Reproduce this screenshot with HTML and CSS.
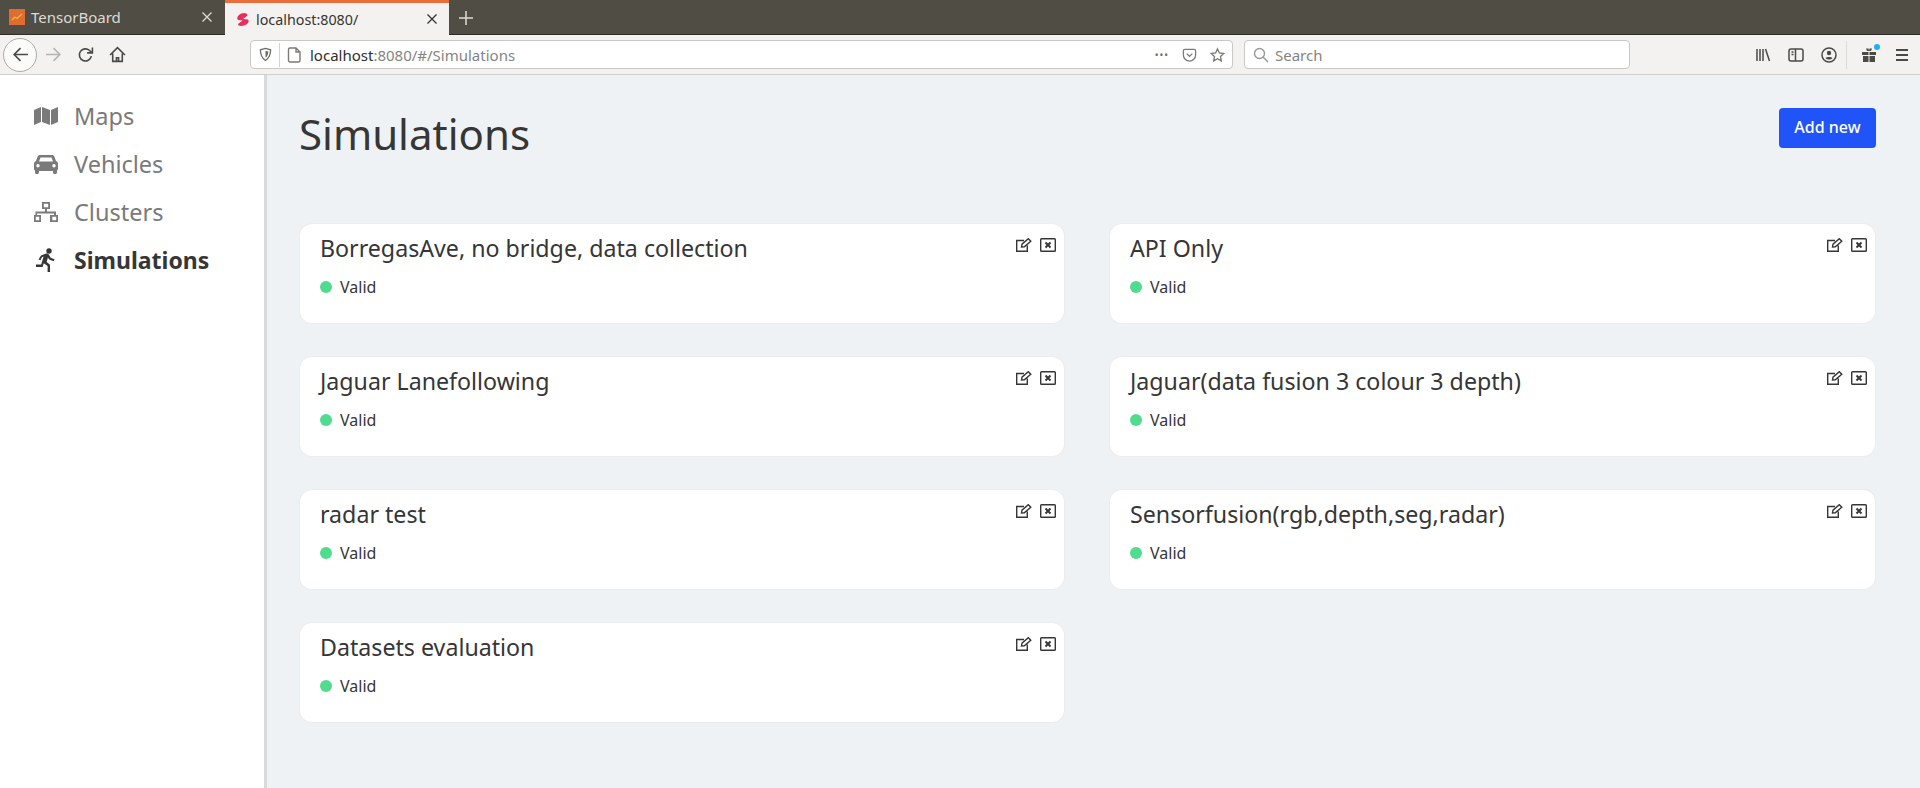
FILE: index.html
```html
<!DOCTYPE html>
<html lang="en">
<head>
    <meta charset="UTF-8">
    <title>localhost:8080/</title>
    <link rel="stylesheet" href="styles.css">
</head>
<body>
<div class="tabbar">
    <div class="tab">
        <svg class="favicon" viewBox="0 0 16 16"><rect width="16" height="16" fill="#dd6d33"/><path d="M3 11l3-3 2 1.500L13 5" fill="none" stroke="#f0b92e" stroke-width="1.300"/></svg>
        <span class="tab-title">TensorBoard</span>
        <svg class="tab-close" viewBox="0 0 10 10"><path d="M.5.5l9 9M9.500.5l-9 9"/></svg>
    </div>
    <div class="tab active">
        <svg class="favicon" viewBox="0 0 12 13"><path d="M7 0c2 0 4 1 3.500 2.500L6 6l5 .5c1 1.500.5 3-.5 4C9.500 12 6 13 4 13 2 13 1 12 1 11l4.500-3.500L1 7C0 6 0 4 1 3c1.500-2 4-3 6-3z" fill="#ea2d5e"/></svg>
        <span class="tab-title">localhost:8080/</span>
        <svg class="tab-close" viewBox="0 0 10 10"><path d="M.5.5l9 9M9.500.5l-9 9"/></svg>
    </div>
    <svg class="new-tab" viewBox="0 0 14 14"><path d="M7 0v14M0 7h14"/></svg>
</div>

<div class="toolbar">
    <div class="nav-buttons">
        <div class="back">
            <svg class="tool-icon" viewBox="0 0 16 16"><path d="M15 8H2M8 2L2 8l6 6"/></svg>
        </div>
        <svg class="tool-icon faded" viewBox="0 0 16 16"><path d="M1 8h13M8 2l6 6-6 6"/></svg>
        <svg class="tool-icon reload" viewBox="0 0 16 16"><path d="M13.500 9.500a5.700 5.700 0 1 1-1.700-5.300L14 6.500M14.500 1.500v5H9.500"/></svg>
        <svg class="tool-icon home" viewBox="0 0 16 16"><path d="M1 8.500L8 1.500l7 7M3.500 7v7.500h9V7M7 14.500v-3.500h2v3.500"/></svg>
    </div>
    <div class="urlbar">
        <svg class="shield" viewBox="0 0 14 15"><path d="M7 1l5.500 1.500c0 5.500-1.500 9-5.500 11.500C3 11.500 1.500 8 1.500 2.500z"/><path class="half" d="M7 3.500l3 .8c0 3-.8 5-3 6.700z"/></svg>
        <span class="url-sep"></span>
        <svg class="url-icon" viewBox="0 0 14 16"><path d="M2.500 1h6l4 4v8.500a1.500 1.500 0 0 1-1.500 1.500H2.500A1.500 1.500 0 0 1 1 13.500v-11A1.500 1.500 0 0 1 2.500 1zM8.500 1v4h4"/></svg>
        <span class="url-text"><span class="url-host">localhost</span>:8080/#/Simulations</span>
        <span class="url-dots">•••</span>
        <svg class="url-icon pocket" viewBox="0 0 16 16"><path d="M3 2h10a1.500 1.500 0 0 1 1.500 1.500V8a6.500 6.500 0 0 1-13 0V3.500A1.500 1.500 0 0 1 3 2zM5 6.500l3 3 3-3"/></svg>
        <svg class="url-icon" viewBox="0 0 16 16"><path d="M8 1.500l2 4.300 4.700.6-3.500 3.200.9 4.700L8 12l-4.100 2.300.9-4.700L1.300 6.400 6 5.800z"/></svg>
    </div>
    <div class="searchbar">
        <svg class="search-icon" viewBox="0 0 16 16"><circle cx="6.500" cy="6.500" r="5"/><path d="M10 10l5 5"/></svg>
        <span>Search</span>
    </div>
    <div class="tool-right">
        <svg class="tool-icon" viewBox="0 0 16 16"><path d="M2 2v12M5 2v12M8 2v12M10.500 2l4 12"/></svg>
        <svg class="tool-icon" viewBox="0 0 16 16"><rect x="1" y="2" width="14" height="12" rx="2"/><path d="M7.500 2v12M3.500 5h2M3.500 7.500h2"/></svg>
        <svg class="tool-icon" viewBox="0 0 16 16"><circle cx="8" cy="8" r="7"/><circle cx="8" cy="6" r="2.200" class="solid"/><path class="solid" d="M4.500 11c1-1.500 6-1.500 7 0-1 1.200-2 1.600-3.500 1.600S5.500 12.200 4.500 11z"/></svg>
        <span class="tool-sep"></span>
        <span class="gift">
            <svg class="tool-icon" viewBox="0 0 16 16"><path class="solid" d="M1 5h6.500v3H1zM8.500 5H15v3H8.500zM2 9h5.500v6H2zM8.500 9H14v6H8.500zM5 1.500h2.500L8 4H6zM11 1.500H8.500L8 4h2z"/></svg>
            <span class="gift-dot"></span>
        </span>
        <svg class="tool-icon menu" viewBox="0 0 16 16"><path d="M2 3h12M2 8h12M2 13h12"/></svg>
    </div>
</div>

<div class="app">
    <nav class="sidebar">
        <a class="nav-item">
            <svg class="nav-icon" viewBox="0 0 24 20"><path d="M0 4l7-3v15l-7 3zM8 1l8 3v15l-8-3zM17 4l7-3v15l-7 3z"/></svg>
            Maps
        </a>
        <a class="nav-item">
            <svg class="nav-icon" viewBox="0 0 24 20"><path fill-rule="evenodd" d="M6 1h12c1 0 2 .6 2.500 2l1.500 4c1.200.4 2 1.400 2 2.700V15c0 .8-.4 1.300-1 1.600V18.500c0 .8-.6 1.500-1.500 1.500h-1c-.9 0-1.500-.7-1.500-1.500V17H5v1.500C5 19.300 4.400 20 3.500 20h-1C1.600 20 1 19.300 1 18.500v-1.900C.4 16.300 0 15.800 0 15V9.700C0 8.400.8 7.400 2 7l1.500-4C4 1.600 5 1 6 1zM6.500 3.500L5 7.500h14l-1.500-4zM4 10a1.700 1.700 0 1 0 0 3.400A1.700 1.700 0 0 0 4 10zm16 0a1.700 1.700 0 1 0 0 3.400A1.700 1.700 0 0 0 20 10z"/></svg>
            Vehicles
        </a>
        <a class="nav-item">
            <svg class="nav-icon" viewBox="0 0 24 20"><path fill-rule="evenodd" d="M8 0h8v7h-3v2.500h9V13h2v7h-8v-7h4v-1.500H3V13h4v7H-1v0H0v-7h1.500V9.500H11V7H8zm1.800 1.800v3.400h4.400V1.800zM1.800 14.800v3.400h3.400v-3.400zm16.500 0v3.400h3.900v-3.400z"/></svg>
            Clusters
        </a>
        <a class="nav-item active">
            <svg class="nav-icon" viewBox="0 0 24 24"><circle cx="15" cy="3" r="2.700"/><path d="M7 7.500l4.500-1.800c1.300-.5 2.700-.2 3.400 1l1.800 3 3.800 1.500-.8 2-4.500-1.800-1.300-1.800-1.200 4.400 3.300 2.800V24h-2.400v-6l-3.800-2.800-1.300 3.800H2v-2.400h5.200l2.400-8-1.700.7-1.400 3-2-.9z"/></svg>
            Simulations
        </a>
    </nav>
    <main class="content">
        <div class="page-head">
            <h1>Simulations</h1>
            <button class="add-btn">Add new</button>
        </div>
        <div class="card-grid">
            <div class="card">
                <div class="card-actions">
                    <svg class="act" viewBox="0 0 16 14"><path d="M8 2.500H.7v10.800h10.600V7.500M5.500 9l.5-2.800L12.300.7l2.500 2.500L8.300 8.800z"/></svg>
                    <svg class="act" viewBox="0 0 16 14"><rect x=".7" y=".7" width="14.600" height="12.600" rx=".8"/><path class="x" d="M5.500 4.500l5 5M10.500 4.500l-5 5"/></svg>
                </div>
                <h3>BorregasAve, no bridge, data collection</h3>
                <div class="status"><span class="dot"></span>Valid</div>
            </div>
            <div class="card">
                <div class="card-actions">
                    <svg class="act" viewBox="0 0 16 14"><path d="M8 2.500H.7v10.800h10.600V7.500M5.500 9l.5-2.800L12.300.7l2.500 2.500L8.300 8.800z"/></svg>
                    <svg class="act" viewBox="0 0 16 14"><rect x=".7" y=".7" width="14.600" height="12.600" rx=".8"/><path class="x" d="M5.500 4.500l5 5M10.500 4.500l-5 5"/></svg>
                </div>
                <h3>API Only</h3>
                <div class="status"><span class="dot"></span>Valid</div>
            </div>
            <div class="card">
                <div class="card-actions">
                    <svg class="act" viewBox="0 0 16 14"><path d="M8 2.500H.7v10.800h10.600V7.500M5.500 9l.5-2.800L12.300.7l2.500 2.500L8.300 8.800z"/></svg>
                    <svg class="act" viewBox="0 0 16 14"><rect x=".7" y=".7" width="14.600" height="12.600" rx=".8"/><path class="x" d="M5.500 4.500l5 5M10.500 4.500l-5 5"/></svg>
                </div>
                <h3>Jaguar Lanefollowing</h3>
                <div class="status"><span class="dot"></span>Valid</div>
            </div>
            <div class="card">
                <div class="card-actions">
                    <svg class="act" viewBox="0 0 16 14"><path d="M8 2.500H.7v10.800h10.600V7.500M5.500 9l.5-2.800L12.300.7l2.500 2.500L8.300 8.800z"/></svg>
                    <svg class="act" viewBox="0 0 16 14"><rect x=".7" y=".7" width="14.600" height="12.600" rx=".8"/><path class="x" d="M5.500 4.500l5 5M10.500 4.500l-5 5"/></svg>
                </div>
                <h3>Jaguar(data fusion 3 colour 3 depth)</h3>
                <div class="status"><span class="dot"></span>Valid</div>
            </div>
            <div class="card">
                <div class="card-actions">
                    <svg class="act" viewBox="0 0 16 14"><path d="M8 2.500H.7v10.800h10.600V7.500M5.500 9l.5-2.800L12.300.7l2.500 2.500L8.300 8.800z"/></svg>
                    <svg class="act" viewBox="0 0 16 14"><rect x=".7" y=".7" width="14.600" height="12.600" rx=".8"/><path class="x" d="M5.500 4.500l5 5M10.500 4.500l-5 5"/></svg>
                </div>
                <h3>radar test</h3>
                <div class="status"><span class="dot"></span>Valid</div>
            </div>
            <div class="card">
                <div class="card-actions">
                    <svg class="act" viewBox="0 0 16 14"><path d="M8 2.500H.7v10.800h10.600V7.500M5.500 9l.5-2.800L12.300.7l2.500 2.500L8.300 8.800z"/></svg>
                    <svg class="act" viewBox="0 0 16 14"><rect x=".7" y=".7" width="14.600" height="12.600" rx=".8"/><path class="x" d="M5.500 4.500l5 5M10.500 4.500l-5 5"/></svg>
                </div>
                <h3>Sensorfusion(rgb,depth,seg,radar)</h3>
                <div class="status"><span class="dot"></span>Valid</div>
            </div>
            <div class="card">
                <div class="card-actions">
                    <svg class="act" viewBox="0 0 16 14"><path d="M8 2.500H.7v10.800h10.600V7.500M5.500 9l.5-2.800L12.300.7l2.500 2.500L8.300 8.800z"/></svg>
                    <svg class="act" viewBox="0 0 16 14"><rect x=".7" y=".7" width="14.600" height="12.600" rx=".8"/><path class="x" d="M5.500 4.500l5 5M10.500 4.500l-5 5"/></svg>
                </div>
                <h3>Datasets evaluation</h3>
                <div class="status"><span class="dot"></span>Valid</div>
            </div>
        </div>
    </main>
</div>
</body>
</html>
```

FILE: styles.css
```css
* {
    box-sizing: border-box;
}

body {
    margin: 0;
    height: 100vh;
    display: flex;
    flex-direction: column;
    overflow: hidden;
    font-family: "Noto Sans", "Open Sans", sans-serif;
    color: #363636;
    background-color: #eff2f5;
}

/* browser tabs */
.tabbar {
    height: 35px;
    flex: none;
    display: flex;
    align-items: flex-end;
    background-color: #504d45;
    border-bottom: 1px solid #2e2c27;
}

.tab {
    width: 225px;
    height: 34px;
    display: flex;
    align-items: center;
    padding: 0 13px 0 9px;
    color: #dddbd5;
    font-size: 15px;
}

.tab.active {
    width: 224px;
    height: 35px;
    margin-bottom: -1px;
    padding: 0 12px;
    color: #38342e;
    background-color: #f3f2f0;
    border-top: 3px solid #e96e3c;
    font-size: 14.300px;
}

.favicon {
    width: 16px;
    height: 16px;
    margin-right: 6px;
}

.tab.active .favicon {
    width: 12px;
    height: 13px;
    margin-right: 7px;
}

.tab-title {
    flex: 1;
}

.tab-close {
    width: 10px;
    height: 10px;
    fill: none;
    stroke: currentColor;
    stroke-width: 1.300;
}

.new-tab {
    width: 14px;
    height: 14px;
    margin: 0 0 9px 10px;
    fill: none;
    stroke: #dddbd5;
    stroke-width: 1.500;
}

/* browser toolbar */
.toolbar {
    height: 40px;
    flex: none;
    display: flex;
    align-items: center;
    background-color: #f3f2f0;
    border-bottom: 1px solid #cfcfcd;
}

.nav-buttons {
    width: 250px;
    flex: none;
    display: flex;
    align-items: center;
    gap: 15px;
    padding-left: 3px;
}

.back {
    width: 34px;
    height: 34px;
    margin-right: -7px;
    display: flex;
    align-items: center;
    justify-content: center;
    background-color: #fbfbfa;
    border: 1px solid #aeaca8;
    border-radius: 50%;
}

.tool-icon {
    width: 16px;
    height: 16px;
    flex: none;
    fill: none;
    stroke: #4b4a46;
    stroke-width: 1.500;
}

.nav-buttons .tool-icon {
    width: 17px;
    height: 17px;
}

.tool-icon.faded {
    stroke: #b5b4b1;
}

.tool-icon.menu {
    stroke-width: 1.800;
}

.solid {
    fill: #4b4a46;
    stroke: none;
}

.urlbar,
.searchbar {
    height: 29px;
    flex: none;
    display: flex;
    align-items: center;
    background-color: #fff;
    border: 1px solid #c9c8c5;
    border-radius: 4px;
    font-size: 15px;
}

.urlbar {
    width: 983px;
    padding: 0 7px 0 8px;
}

.searchbar {
    width: 386px;
    margin-left: 11px;
    padding: 0 8px;
    gap: 6px;
    color: #85847f;
}

.shield {
    width: 13px;
    height: 15px;
    flex: none;
    fill: none;
    stroke: #6e6d69;
    stroke-width: 1.400;
}

.shield .half {
    fill: #6e6d69;
    stroke: none;
}

.url-icon {
    width: 15px;
    height: 16px;
    flex: none;
    fill: none;
    stroke: #7b7a76;
    stroke-width: 1.400;
}

.search-icon {
    width: 16px;
    height: 16px;
    flex: none;
    fill: none;
    stroke: #9a9995;
    stroke-width: 1.400;
}

.url-sep {
    width: 1px;
    height: 24px;
    margin: 0 7px;
    background-color: #d4d3d0;
}

.url-text {
    flex: 1;
    margin-left: 8px;
    color: #85847f;
}

.url-host {
    color: #2f2e2a;
}

.url-dots {
    margin-right: 13px;
    font-size: 10px;
    letter-spacing: 1px;
    color: #6e6d69;
}

.pocket {
    margin-right: 13px;
}

.tool-right {
    flex: 1;
    display: flex;
    align-items: center;
    justify-content: flex-end;
    gap: 17px;
    padding-right: 10px;
}

.tool-sep {
    width: 1px;
    height: 28px;
    margin: 0 -3px 0 -8px;
    background-color: #dcdbd8;
}

.gift {
    position: relative;
    display: flex;
}

.gift-dot {
    position: absolute;
    top: -3px;
    right: -3px;
    width: 6px;
    height: 6px;
    border-radius: 50%;
    background-color: #1cb0f6;
}

/* app */
.app {
    flex: 1;
    display: flex;
    min-height: 0;
}

.sidebar {
    width: 267px;
    flex: none;
    padding: 17px 0 0 34px;
    background-color: #fff;
    border-right: 3px solid #d9dadc;
}

.nav-item {
    height: 48px;
    display: flex;
    align-items: center;
    color: #7a7a7a;
    font-size: 23.500px;
}

.nav-item.active {
    color: #363636;
    font-size: 23px;
    font-weight: 700;
}

.nav-icon {
    width: 24px;
    height: 20px;
    margin-right: 16px;
    flex: none;
    fill: currentColor;
}

.nav-item.active .nav-icon {
    height: 24px;
}

.content {
    flex: 1;
    padding: 33px 44px 0 33px;
}

.page-head {
    height: 116px;
    display: flex;
    align-items: flex-start;
    justify-content: space-between;
}

h1 {
    margin: 0 0 0 -1px;
    font-size: 42px;
    font-weight: 400;
    line-height: 52px;
}

.add-btn {
    width: 97px;
    height: 40px;
    padding: 0 0 2px;
    border: none;
    border-radius: 4px;
    background-color: #2154f8;
    color: #fff;
    font-family: inherit;
    font-size: 16px;
    font-weight: 500;
}

.card-grid {
    display: grid;
    grid-template-columns: 764px 765px;
    grid-auto-rows: 99px;
    gap: 34px 46px;
}

.card {
    position: relative;
    padding: 8px 20px;
    background-color: #fff;
    border-radius: 12px;
    box-shadow: 0 0 2px rgba(10, 10, 10, 0.07);
}

.card h3 {
    margin: 0 0 11px;
    font-size: 23.200px;
    font-weight: 400;
    line-height: 32px;
}

.card-actions {
    position: absolute;
    top: 14px;
    right: 8px;
    display: flex;
    gap: 8px;
}

.act {
    height: 14px;
    width: 16px;
    fill: none;
    stroke: #363636;
    stroke-width: 1.400;
}

.act .x {
    stroke-width: 2;
}

.status {
    display: flex;
    align-items: center;
    font-size: 16px;
    line-height: 24px;
}

.dot {
    width: 12px;
    height: 12px;
    margin-right: 8px;
    border-radius: 50%;
    background-color: #4fdc8f;
}
```
